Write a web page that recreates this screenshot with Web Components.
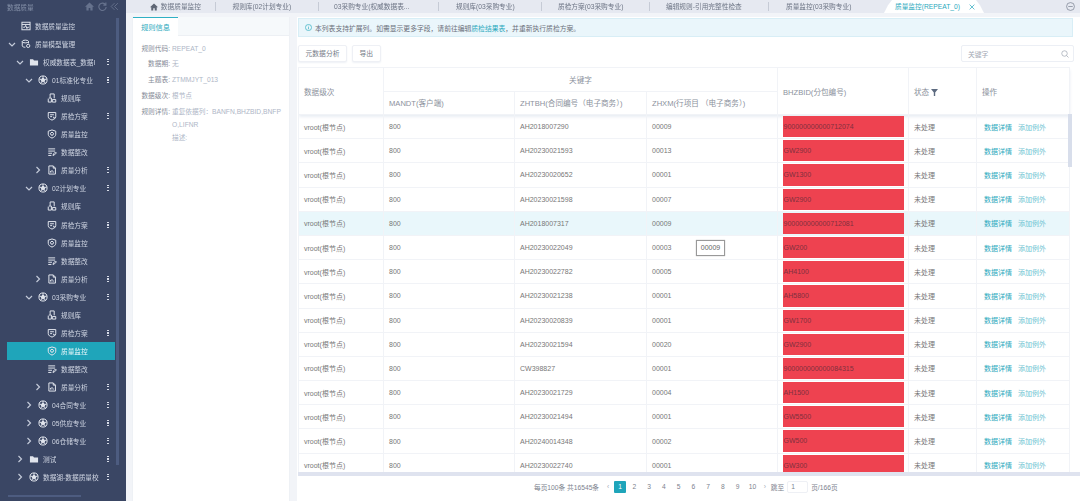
<!DOCTYPE html>
<html lang="zh"><head><meta charset="utf-8"><title>质量监控</title>
<style>
html,body{margin:0;padding:0;height:501px;overflow:hidden;background:#f2f4f8;font:7px "Liberation Sans","Noto Sans CJK SC",sans-serif}
</style></head><body>
<dq-app></dq-app>
<script>
const ICONS={
 monitor:'<rect x="1.5" y="2" width="13" height="12" fill="none"/><path d="M1.5 5.5h13M3.5 10h2.500l1.500-3 2 5 1.200-2h2"/>',
 model:'<ellipse cx="7" cy="4" rx="5" ry="2.200"/><path d="M2 4v7c0 1.200 2.200 2.200 5 2.200M12 4v3"/><circle cx="11.500" cy="11" r="2.600"/>',
 folder:'<path d="M1.500 3.500h5l1.500 2h6.500v8h-13z" fill="currentColor" stroke="none"/>',
 ball:'<circle cx="8" cy="8" r="6.500"/><path d="M8 5l3 2.200-1.100 3.500H6.100L5 7.200z" fill="currentColor"/><path d="M8 5V1.500M11 7.200l3.300-1M9.900 10.700l2 2.800M6.100 10.700l-2 2.800M5 7.200l-3.300-1"/>',
 lib:'<path d="M5 1.500h6.500v7M5 1.500v6M3 8h4v6.500H2V9M8.500 10.500h5.500v4H8.500z"/>',
 plan:'<path d="M2 2.500h12v6.500c0 3-3 4.500-6 5.500-3-1-6-2.500-6-5.500z"/><path d="M5 6h6M5 9h3M10 9l1.500 3 2-2.500"/>',
 watch:'<path d="M8 1.500l6 2v5c0 3-3 5-6 6-3-1-6-3-6-6v-5z"/><path d="M8 5l2.500 1.800-1 3H6.500l-1-3z"/>',
 fix:'<path d="M2 3h11M2 6.500h11M2 10h6M2 13.500h5M9.500 13.500l1-2.500 3-3 1.500 1.500-3 3z"/>',
 doc:'<path d="M3 1.500h7l3.500 3.500v9.500H3z"/><path d="M10 1.500V5h3.500M5.500 12V9.500M8 12V8M10.500 12v-1.500"/>'
};
const svg=(n,s=10)=>`<svg width="${s}" height="${s}" viewBox="0 0 16 16" fill="none" stroke="currentColor" stroke-width="1.600" aria-hidden="true">${ICONS[n]}</svg>`;
function def(tag,html,extra={}){
 customElements.define(tag,class extends HTMLElement{
  connectedCallback(){ if(this.shadowRoot)return; const r=this.attachShadow({mode:'open'}); r.innerHTML=typeof html==='function'?html(this):html; extra.init&&extra.init(this,r);}
 });
}
def('tree-item',el=>{
 const lv=+(el.getAttribute('level')||0), pad=[7,7,15,24,33][lv];
 const open=el.getAttribute('arrow');
 const ch=open==='down'?'<path d="M2 4l3 3 3-3"/>':open==='right'?'<path d="M3.500 2l3 3-3 3"/>':'';
 return `<style>
 :host{display:block;height:18.050px}
 .r{height:100%;box-sizing:border-box;display:flex;align-items:center;padding-left:${pad}px;color:#cfd5e2;white-space:nowrap;position:relative;font-size:6.700px}
 :host([selected]) .r{background:#1fa5ba;color:#e8f7fa;margin-left:7px;padding-left:${pad-7}px;width:108px}
 .a{width:10px;height:10px;flex:none;color:#c3cad9}
 .i{width:10px;height:10px;margin:0 4px;flex:none;color:#e0e4ec;display:flex}
 .t{max-width:${96-pad-28+12}px;overflow:hidden}
 .d{position:absolute;left:107px;top:6px;width:1.500px;height:6px;background:repeating-linear-gradient(#d5dae6 0 1.200px,transparent 1.200px 2.300px)}
 svg{display:block}
 </style><div class="r"><svg class="a" viewBox="0 0 10 10" fill="none" stroke="currentColor" stroke-width="1.200">${ch}</svg><span class="i">${svg(el.getAttribute('icon'))}</span><span class="t"><slot></slot></span>${el.hasAttribute('menu')?'<i class="d"></i>':''}</div>`;
});
def('dq-sidebar',`<style>
 :host{display:block;position:relative;background:#3a4664;height:501px;overflow:hidden}
 header{height:13px;display:flex;align-items:center;padding:0 7px;color:#8490a8;font-size:6.700px;gap:3.500px}
 header span{flex:1}
 header svg{display:block}
 .tree{padding-top:4px}
 .vb{position:absolute;left:116px;top:18px;width:2.500px;height:447px;background:#4d5c80}
 .hb{position:absolute;left:8px;top:494.500px;width:73px;height:2.500px;background:#4d5c80}
 </style>
 <header><span>数据质量</span>
 <svg width="9" height="9" viewBox="0 0 16 16" fill="#66728d"><path d="M8 1L0 8.500h2.500V15h4v-4.500h3V15h4V8.500H16z"/></svg>
 <svg width="9" height="9" viewBox="0 0 16 16" fill="none" stroke="#66728d" stroke-width="2"><path d="M13.500 5A6.500 6.500 0 1 0 14.500 9M14 1v4.500H9.500"/></svg>
 <svg width="9" height="9" viewBox="0 0 16 16" fill="none" stroke="#66728d" stroke-width="1.600"><path d="M8 2L2 8l6 6M14 2L8 8l6 6"/></svg></header>
 <div class="tree">
 <tree-item icon="monitor" level="0">数据质量监控</tree-item>
 <tree-item icon="model" level="1" arrow="down">质量模型管理</tree-item>
 <tree-item icon="folder" level="2" arrow="down" menu>权威数据表_数据I</tree-item>
 <tree-item icon="ball" level="3" arrow="down" menu>01标准化专业</tree-item>
 <tree-item icon="lib" level="4">规则库</tree-item>
 <tree-item icon="plan" level="4" menu>质检方案</tree-item>
 <tree-item icon="watch" level="4">质量监控</tree-item>
 <tree-item icon="fix" level="4">数据整改</tree-item>
 <tree-item icon="doc" level="4" arrow="right" menu>质量分析</tree-item>
 <tree-item icon="ball" level="3" arrow="down" menu>02计划专业</tree-item>
 <tree-item icon="lib" level="4">规则库</tree-item>
 <tree-item icon="plan" level="4" menu>质检方案</tree-item>
 <tree-item icon="watch" level="4">质量监控</tree-item>
 <tree-item icon="fix" level="4">数据整改</tree-item>
 <tree-item icon="doc" level="4" arrow="right" menu>质量分析</tree-item>
 <tree-item icon="ball" level="3" arrow="down" menu>03采购专业</tree-item>
 <tree-item icon="lib" level="4">规则库</tree-item>
 <tree-item icon="plan" level="4" menu>质检方案</tree-item>
 <tree-item icon="watch" level="4" selected>质量监控</tree-item>
 <tree-item icon="fix" level="4">数据整改</tree-item>
 <tree-item icon="doc" level="4" arrow="right" menu>质量分析</tree-item>
 <tree-item icon="ball" level="3" arrow="right" menu>04合同专业</tree-item>
 <tree-item icon="ball" level="3" arrow="right" menu>05供应专业</tree-item>
 <tree-item icon="ball" level="3" arrow="right" menu>06仓储专业</tree-item>
 <tree-item icon="folder" level="2" arrow="right" menu>测试</tree-item>
 <tree-item icon="ball" level="2" arrow="right" menu>数据湖-数据质量校</tree-item>
 </div><div class="vb"></div><div class="hb"></div>`);
def('dq-tab',el=>`<style>
 :host{display:block;flex:none;box-sizing:border-box;height:13px;width:${el.getAttribute('w')}px;padding-left:${el.getAttribute('p')||16}px;position:relative;color:#6c7484;font-size:6.700px;line-height:13px;white-space:nowrap}
 :host::after{content:"";position:absolute;right:0;top:2px;height:9px;width:1px;background:#c6cbd6}
 :host([last])::after{display:none}
 </style><slot></slot>`);
def('dq-tabs',`<style>
 :host{display:flex;height:13px;background:#e6e9f1;position:relative}
 .a{position:absolute;left:758px;top:0;height:13px;width:100px;box-sizing:border-box;padding-left:11px;color:#2ba9bd;font-size:6.700px;line-height:13px;white-space:nowrap;background:#fff;clip-path:polygon(0 100%,4% 40%,8% 0,92% 0,96% 40%,100% 100%)}
 .x{position:absolute;left:85px;top:3.500px}
 .m{position:absolute;left:940px;top:2px}
 .h{vertical-align:-1.500px;margin-right:1px;color:#5f6675}
 </style>
 <dq-tab w="90" p="24"><svg class="h" width="8" height="8" viewBox="0 0 16 16" fill="currentColor"><path d="M8 1L0 8.500h2.500V15h4v-4.500h3V15h4V8.500H16z"/></svg> 数据质量监控</dq-tab>
 <dq-tab w="103" p="16.500">规则库(02计划专业)</dq-tab>
 <dq-tab w="120" p="15">03采购专业(权威数据表...</dq-tab>
 <dq-tab w="103" p="17">规则库(03采购专业)</dq-tab>
 <dq-tab w="108">质检方案(03采购专业)</dq-tab>
 <dq-tab w="119">编辑规则-引用完整性检查</dq-tab>
 <dq-tab w="100" p="17" last>质量监控(03采购专业)</dq-tab>
 <div class="a">质量监控(REPEAT_0)<svg class="x" width="6" height="6" viewBox="0 0 10 10" fill="none" stroke="#2ba9bd" stroke-width="1.200"><path d="M1 1l8 8M9 1l-8 8"/></svg></div>
 <svg class="m" width="9" height="9" viewBox="0 0 16 16" fill="none" stroke="#7a8292" stroke-width="1.300"><circle cx="8" cy="8" r="7"/><path d="M4 8h8"/></svg>`);
def('rule-row',el=>`<style>
 :host{display:grid;grid-template-columns:37px 1fr;column-gap:2px;min-height:15.800px;align-items:start;line-height:13px;font-size:6.700px;padding-top:1.500px;box-sizing:border-box}
 .l{text-align:right;color:#878d99}
 .v{color:#aeb6c6;word-break:break-all;padding-right:5px}
 </style><div class="l">${el.getAttribute('label')}</div><div class="v"><slot></slot></div>`);
def('rule-panel',`<style>
 :host{display:block;background:#fff;border:1px solid #eef1f5;border-width:0 1px;height:484px;box-sizing:border-box}
 .h{height:19px;background:#f6f9fb;border-bottom:1px solid #edf0f4;box-sizing:border-box}
 .t{width:45px;height:19px;background:#fff;border-top:1px solid #2fb0c4;box-sizing:border-box;color:#2ba9bd;text-align:center;line-height:20px;font-size:7.300px}
 .b{padding-top:4px}
 </style><div class="h"><div class="t">规则信息</div></div><div class="b">
 <rule-row label="规则代码:">REPEAT_0</rule-row>
 <rule-row label="数据期:">无</rule-row>
 <rule-row label="主题表:">ZTMMJYT_013</rule-row>
 <rule-row label="数据级次:">根节点</rule-row>
 <rule-row label="规则详情:">重复依据列：BANFN,BHZBID,BNFPO,LIFNR<br>描述:</rule-row>
 </div>`);
const DATA=[["AH2018007290","00009","900000000000712074"],["AH20230021593","00013","GW2900"],["AH20230020652","00001","GW1300"],["AH20230021598","00007","GW2900"],["AH2018007317","00009","900000000000712081"],["AH20230022049","00003","GW200"],["AH20230022782","00005","AH4100"],["AH20230021238","00001","AH5800"],["AH20230020839","00001","GW1700"],["AH20230021594","00020","GW2900"],["CW398827","00001","900000000000084315"],["AH20230021729","00004","AH1500"],["AH20230021494","00001","GW5500"],["AH20240014348","00002","GW500"],["AH20230022740","00001","GW300"]];
def('data-table',`<style>
 :host{display:block;height:405px;overflow:hidden;position:relative}
 table{border-collapse:collapse;table-layout:fixed;width:771px;font-size:7px}
 th,td{border:1px solid #f1f3f7;padding:0 0 0 5px;text-align:left;white-space:nowrap;overflow:hidden;color:#777;font-weight:400;height:24.200px;box-sizing:border-box}
 th{color:#8b919c;font-size:7.600px;height:23.500px}
 th.c{text-align:center;padding:0}
 thead{box-shadow:0 2px 3px #e9edf4}
 tr.hl td{background:#e9f7fb}
 td.red{padding:1px 4px 1px 4.500px}
 td.op{padding-left:7px}
 .r{display:block;background:#ee4250;height:21.200px;line-height:21.200px;color:#80303e;padding-left:1px;overflow:hidden}
 a{color:#2ba9bd}a+a{color:#6fc4d2;margin-left:6px}
 .f{vertical-align:-1px;margin-left:2px}
 .tip{position:absolute;left:398px;top:173px;width:29px;height:16px;box-sizing:border-box;border:1px solid #999;background:#fff;box-shadow:0 0 1px #aaa;color:#666;font-size:7px;line-height:14px;text-align:center}
 .sb{position:absolute;left:770px;top:47px;width:4px;height:53px;background:#d8deeb}
 </style><table><colgroup><col style="width:85px"><col style="width:131px"><col style="width:132px"><col style="width:131px"><col style="width:131px"><col style="width:68px"><col style="width:93px"></colgroup>
 <thead><tr><th rowspan="2">数据级次</th><th colspan="3" class="c">关键字</th><th rowspan="2">BHZBID(分包编号)</th><th rowspan="2">状态<svg class="f" width="7" height="7" viewBox="0 0 10 10" fill="#5d6b80"><path d="M0 0h10L6 5v5H4V5z"/></svg></th><th rowspan="2">操作</th></tr>
 <tr><th>MANDT(客户端)</th><th>ZHTBH(合同编号（电子商务）)</th><th>ZHXM(行项目 （电子商务）)</th></tr></thead><tbody id="b"></tbody></table>
 <div class="tip">00009</div><div class="sb"></div>`,{init(el,r){
  r.getElementById('b').innerHTML=DATA.map((d,i)=>`<tr${i==4?' class="hl"':''}><td>vroot(根节点)</td><td>800</td><td>${d[0]}</td><td>${d[1]}</td><td class="red"><span class="r">${d[2]}</span></td><td>未处理</td><td class="op"><a>数据详情</a><a>添加例外</a></td></tr>`).join('');
 }});
def('dq-button',`<style>
 :host{display:inline-block;height:17px;line-height:16px;padding:0 6.500px;border:1px solid #eef0f5;border-radius:2px;background:#fff;box-shadow:0 1px 2px #eef1f6;color:#767c88;font-size:6.800px;box-sizing:border-box}
 </style><slot></slot>`);
def('dq-pager',`<style>
 :host{display:flex;align-items:center;height:25px;padding-left:236px;color:#7c828e;font-size:6.700px;border-top:4px solid #dfe3ef;box-sizing:border-box;background:#fff;white-space:nowrap}
 .n{width:14.750px;text-align:center}
 .on{width:12px;height:12px;margin:0 1.500px 0 1px;line-height:12px;background:#1fa5ba;color:#fff;border-radius:1px;text-align:center}
 .i{width:21px;height:12px;border:1px solid #eef0f5;border-radius:2px;box-sizing:border-box;line-height:10px;padding-left:3px;margin:0 3px}
 .g{color:#a6acb8;width:10px;text-align:center}
 </style><span>每页100条 共16545条</span><span class="g" style="margin-left:4px">‹</span>
 <span class="on">1</span><span class="n" style="margin-left:-.5px">2</span><span class="n">3</span><span class="n">4</span><span class="n">5</span><span class="n">6</span><span class="n">7</span><span class="n">8</span><span class="n">9</span><span class="n">10</span><span class="g" style="margin-right:1px">›</span>
 <span>跳至</span><span class="i">1</span><span>页/166页</span>`);
def('dq-main',`<style>
 :host{display:block;background:#fff;height:484px;padding-left:1px;position:relative;overflow:hidden}
 .al{margin-right:7px;height:19px;background:#eaf6fb;border:1px solid #d8eef6;box-sizing:border-box;display:flex;align-items:center;padding-left:6px;color:#6a6f7a;font-size:6.800px;gap:3px;margin-top:1px}
 .al a{color:#2ba9bd}
 .tb{display:flex;gap:5px;padding:8px 6px 5px 0;height:17px;align-items:center}
 .s{margin-left:auto;width:113px;height:17px;border:1px solid #eceff5;box-sizing:border-box;border-radius:2px;display:flex;align-items:center;justify-content:space-between;padding:0 4px 0 6px;color:#a3a9b4;font-size:6.800px}
 </style>
 <div class="al"><svg width="7" height="7" viewBox="0 0 16 16" fill="none" stroke="#2ba9bd" stroke-width="1.500"><circle cx="8" cy="8" r="7"/><path d="M8 7v5M8 4v1.500"/></svg><span>本列表支持扩展列。如需显示更多字段，请前往编辑<a>质检结果表</a>，并重新执行质检方案。</span></div>
 <div class="tb"><dq-button>元数据分析</dq-button><dq-button>导出</dq-button><div class="s">关键字<svg width="8" height="8" viewBox="0 0 16 16" fill="none" stroke="#a3a9b4" stroke-width="1.500"><circle cx="7" cy="7" r="5.500"/><path d="M11 11l4 4"/></svg></div></div>
 <data-table></data-table><dq-pager></dq-pager>`);
def('dq-app',`<style>
 :host{display:grid;grid-template-columns:126px 1fr;height:501px;width:1080px;overflow:hidden;filter:blur(.5px)}
 .c{min-width:0}
 .w{display:grid;grid-template-columns:158px 1fr;column-gap:7px;padding:4px 0 0 6px}
 </style><dq-sidebar></dq-sidebar><div class="c"><dq-tabs></dq-tabs><div class="w"><rule-panel></rule-panel><dq-main></dq-main></div></div>`);
</script>
</body></html>
